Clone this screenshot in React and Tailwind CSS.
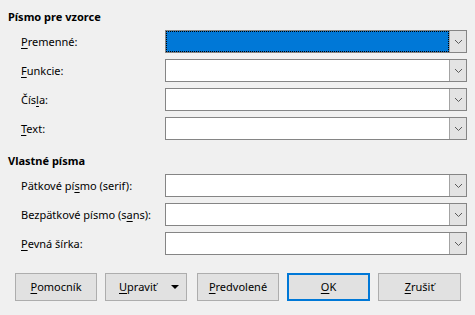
import React from "react";

const font = { fontFamily: '"Noto Sans", "Open Sans", sans-serif' };

function Chevron() {
  return (
    <svg width="9" height="6" viewBox="0 0 9 6" className="block">
      <path d="M1 1 L4.5 4.5 L8 1" fill="none" stroke="#5a5a5a" strokeWidth="1" />
    </svg>
  );
}

function Combo({ focused }) {
  return (
    <div className="flex h-[23px] w-[302px] border border-[#858585] bg-white">
      <div className="flex-1 p-0">
        {focused ? (
          <div className="h-full w-full border border-dotted border-black bg-[#0078d7]"></div>
        ) : null}
      </div>
      <div className="flex w-[17px] items-center justify-center border-l border-[#a3a3a3] bg-[#e3e3e3]">
        <Chevron />
      </div>
    </div>
  );
}

function U({ children }) {
  return <u className="underline-offset-2">{children}</u>;
}

function Row({ label, focused }) {
  return (
    <div className="flex h-[23px] items-center">
      <div className="w-[165px] pl-[21px] text-[11px] leading-none text-black">{label}</div>
      <Combo focused={focused} />
    </div>
  );
}

function Btn({ children, w, ml, primary }) {
  return (
    <div
      className={
        "flex h-[28px] items-center justify-center bg-[#e1e1e1] text-[11px] text-black " +
        (primary ? "border-2 border-[#0078d7]" : "border border-[#adadad]")
      }
      style={{ width: w, marginLeft: ml }}
    >
      {children}
    </div>
  );
}

export default function App() {
  return (
    <div className="h-[315px] w-[475px] overflow-hidden bg-[#f0f0f0] pt-[8px]" style={font}>
      <div className="h-[17px] pl-[8px] text-[11px] font-bold leading-[17px] text-black">Písmo pre vzorce</div>
      <div className="mt-[5px] flex flex-col gap-[6px]">
        <Row label={<><U>P</U>remenné:</>} focused />
        <Row label={<><U>F</U>unkcie:</>} />
        <Row label={<>Čís<U>l</U>a:</>} />
        <Row label={<><U>T</U>ext:</>} />
      </div>
      <div className="mt-[12px] h-[17px] pl-[8px] text-[11px] font-bold leading-[17px] text-black">Vlastné písma</div>
      <div className="mt-[5px] flex flex-col gap-[6px]">
        <Row label={<>Pätkové pí<U>s</U>mo (serif):</>} />
        <Row label={<>Bezpätkové písmo (s<U>a</U>ns):</>} />
        <Row label={<><U>P</U>evná šírka:</>} />
      </div>
      <div className="mt-[18px] flex">
        <Btn w={82} ml={15}><span><U>P</U>omocník</span></Btn>
        <Btn w={82} ml={8}>
          <div className="flex w-full items-center pl-[13px] pr-[7px]">
            <span className="flex-1"><U>U</U>praviť</span>
            <svg width="8" height="5" viewBox="0 0 8 5" className="block">
              <path d="M0 0 L8 0 L4 4 Z" fill="#000" />
            </svg>
          </div>
        </Btn>
        <Btn w={82} ml={10}><span><U>P</U>redvolené</span></Btn>
        <Btn w={83} ml={8} primary><span><U>O</U>K</span></Btn>
        <Btn w={83} ml={8}><span><U>Z</U>rušiť</span></Btn>
      </div>
    </div>
  );
}
